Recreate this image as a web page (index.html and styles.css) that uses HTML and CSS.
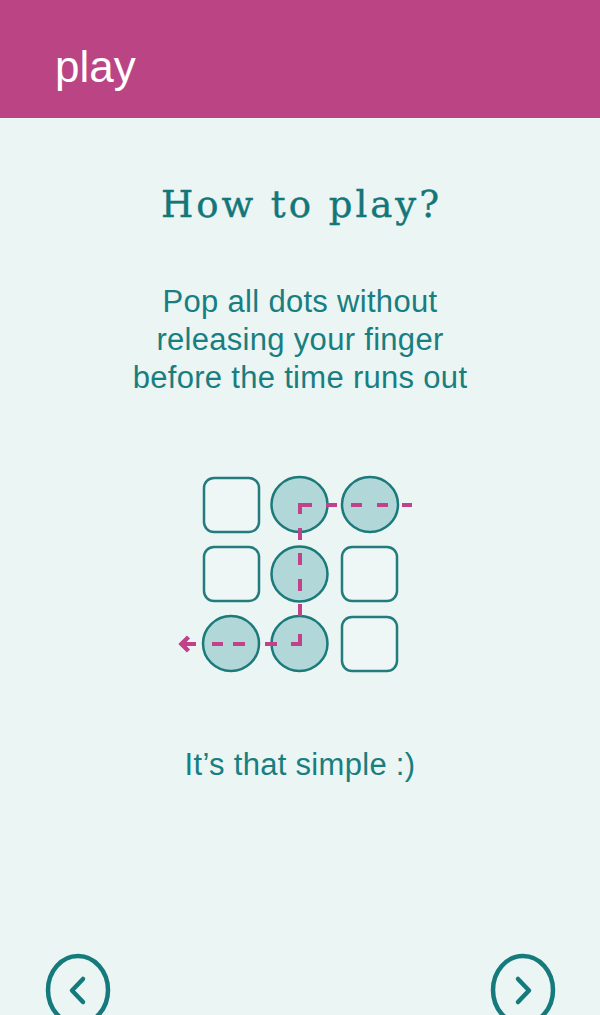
FILE: index.html
```html
<!DOCTYPE html>
<html>
<head>
<meta charset="utf-8">
<link rel="stylesheet" href="styles.css">
</head>
<body>
<header class="topbar"><span class="topbar-title">play</span></header>
<main class="content">
  <h1 class="title">How to play?</h1>
  <p class="lead">Pop all dots without<br>releasing your finger<br>before the time runs out</p>
  <svg class="diagram" width="260" height="220" viewBox="170 460 260 220">
    <g class="box">
      <rect x="204" y="478" width="55" height="54" rx="10"/>
      <rect x="204" y="547" width="55" height="54" rx="10"/>
      <rect x="342" y="547" width="55" height="54" rx="10"/>
      <rect x="342" y="617" width="55" height="54" rx="10"/>
    </g>
    <g class="dot">
      <ellipse cx="299.5" cy="504.5" rx="28" ry="27.5"/>
      <ellipse cx="370" cy="504.5" rx="28" ry="27.5"/>
      <ellipse cx="299.5" cy="574" rx="28" ry="27.5"/>
      <ellipse cx="231" cy="643.5" rx="28" ry="27.5"/>
      <ellipse cx="299.5" cy="643.5" rx="28" ry="27.5"/>
    </g>
    <g class="trail">
      <polyline points="312,505 300,505 300,514"/>
      <line x1="326" y1="505" x2="337" y2="505"/>
      <line x1="351" y1="505" x2="362" y2="505"/>
      <line x1="377" y1="505" x2="388" y2="505"/>
      <line x1="402" y1="505" x2="412" y2="505"/>
      <line x1="300" y1="528" x2="300" y2="540"/>
      <line x1="300" y1="553" x2="300" y2="565"/>
      <line x1="300" y1="579" x2="300" y2="591"/>
      <line x1="300" y1="604" x2="300" y2="616"/>
      <polyline points="300,634 300,644 291,644"/>
      <line x1="265" y1="644" x2="277" y2="644"/>
      <line x1="233" y1="644" x2="245" y2="644"/>
      <line x1="212" y1="644" x2="223" y2="644"/>
      <line x1="182" y1="644" x2="196" y2="644"/>
      <polyline class="tip" points="188.5,637 181.5,644 188.5,651"/>
    </g>
  </svg>
  <p class="outro">It’s that simple :)</p>
  <nav class="pager">
    <svg class="pager-btn" width="70" height="80" viewBox="0 0 70 80">
      <ellipse cx="35" cy="38" rx="30" ry="34"/>
      <polyline points="40,27 29,38.5 40,50"/>
    </svg>
    <svg class="pager-btn" width="70" height="80" viewBox="0 0 70 80">
      <ellipse cx="35" cy="38" rx="30" ry="34"/>
      <polyline points="30,27 41,38.5 30,50"/>
    </svg>
  </nav>
</main>
</body>
</html>
```
FILE: styles.css
```css
html, body {
  margin: 0;
  padding: 0;
}
body {
  width: 600px;
  height: 1015px;
  overflow: hidden;
  background: #ebf5f4;
  font-family: "Liberation Sans", Arial, sans-serif;
}
.topbar {
  height: 118px;
  background: #bb4485;
  display: flex;
  align-items: flex-start;
  padding: 0 0 0 55px;
  box-sizing: border-box;
}
.topbar-title {
  color: #ffffff;
  font-size: 44px;
  line-height: 44px;
  margin-top: 45px;
}
.content {
  display: flex;
  flex-direction: column;
  align-items: center;
  color: #187e80;
}
.title {
  margin: 65px 0 0;
  font-family: "DejaVu Serif", serif;
  font-weight: normal;
  font-size: 37px;
  line-height: 44px;
  color: #137779;
  letter-spacing: 3px;
  padding-left: 3px;
  -webkit-text-stroke: 0.4px #137779;
}
.lead {
  margin: 56px 0 0;
  font-size: 31px;
  line-height: 38px;
  letter-spacing: 0.3px;
  text-align: center;
}
.diagram {
  display: block;
  margin-top: 63px;
}
.box rect {
  fill: #eef7f6;
  stroke: #227c7d;
  stroke-width: 2.5;
}
.dot ellipse {
  fill: #b2d7d8;
  stroke: #1b7a7a;
  stroke-width: 2.5;
}
.trail line, .trail polyline {
  fill: none;
  stroke: #c0428a;
  stroke-width: 4;
}
.trail .tip {
  stroke-width: 4.5;
}
.outro {
  margin: 66px 0 0;
  font-size: 31px;
  line-height: 38px;
  letter-spacing: 0.3px;
}
.pager {
  align-self: stretch;
  display: flex;
  justify-content: space-between;
  padding: 0 42px 0 43px;
  margin-top: 168px;
}
.pager-btn {
  display: block;
}
.pager-btn ellipse {
  fill: none;
  stroke: #147a7b;
  stroke-width: 4.5;
}
.pager-btn polyline {
  fill: none;
  stroke: #147a7b;
  stroke-width: 4.5;
  stroke-linecap: round;
  stroke-linejoin: round;
}
```
